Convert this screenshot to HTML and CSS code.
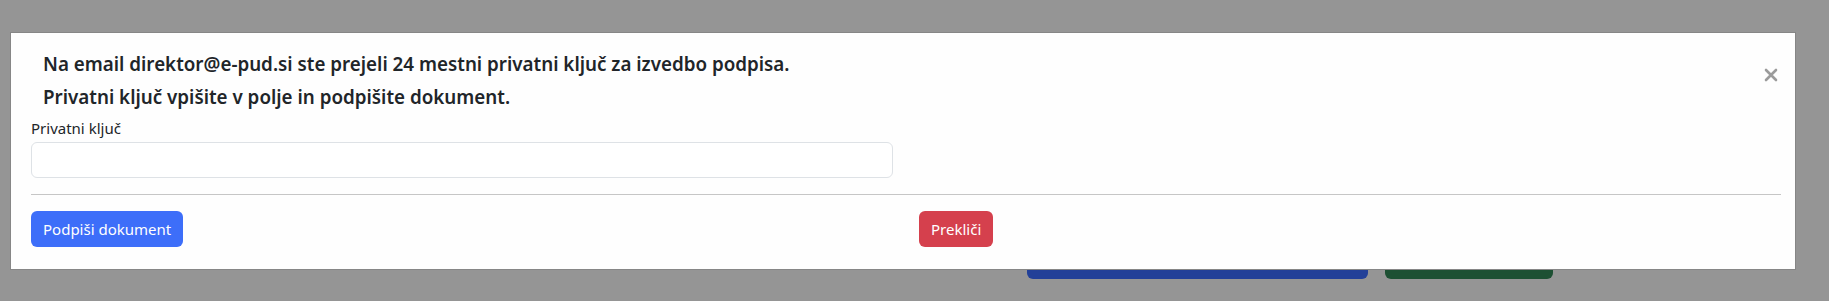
FILE: index.html
```html
<!DOCTYPE html>
<html lang="sl">
<head>
    <meta charset="UTF-8">
    <meta name="viewport" content="width=device-width, initial-scale=1.0">
    <title>Podpis dokumenta</title>
    <link rel="stylesheet" href="styles.css">
</head>
<body>
    <div class="page">
        <div class="page-btn page-btn-blue"></div>
        <div class="page-btn page-btn-green"></div>
    </div>

    <div class="modal">
        <div class="modal-head">
            <h5 class="modal-title">
                Na email direktor@e-pud.si ste prejeli 24 mestni privatni ključ za izvedbo podpisa.<br>
                Privatni ključ vpišite v polje in podpišite dokument.
            </h5>
            <button class="close" type="button" aria-label="Zapri">
                <svg width="14" height="14" viewBox="0 0 14 14">
                    <path d="M2 2 L12 12 M12 2 L2 12" stroke="#9b9b9b" stroke-width="2.6" stroke-linecap="round"/>
                </svg>
            </button>
        </div>

        <div class="grid">
            <div class="field">
                <label for="key">Privatni ključ</label>
                <input type="text" id="key" class="input">
            </div>
        </div>

        <hr class="sep">

        <div class="grid">
            <div><button class="btn btn-primary">Podpiši dokument</button></div>
            <div><button class="btn btn-danger">Prekliči</button></div>
        </div>
    </div>
</body>
</html>
```

FILE: styles.css
```css
body {
    margin: 0;
    height: 301px;
    overflow: hidden;
    background-color: #959595;
    font-family: "Noto Sans", "DejaVu Sans", sans-serif;
    color: #212529;
}

/* page behind the backdrop */
.page {
    display: flex;
    gap: 17px;
    padding: 239px 0 0 1027px;
}

.page-btn {
    height: 40px;
    border-radius: 6px;
}

.page-btn-blue {
    width: 341px;
    background: #224098;
}

.page-btn-green {
    width: 168px;
    background: #1d5033;
}

/* modal dialog */
.modal {
    position: absolute;
    left: 10px;
    top: 32px;
    width: 1786px;
    height: 238px;
    box-sizing: border-box;
    background: #fefefe;
    border: 1px solid #868686;
    padding: 15px 14px 0 20px;
}

.modal-head {
    display: flex;
    justify-content: space-between;
    align-items: flex-start;
    padding-left: 12px;
}

.modal-title {
    margin: 0;
    font-size: 18.8px;
    font-weight: 600;
    line-height: 33px;
}

.close {
    border: none;
    background: none;
    padding: 0;
    margin: 20px 3px 0 0;
    width: 14px;
    height: 14px;
    cursor: pointer;
}

.grid {
    display: grid;
    grid-template-columns: 1fr 1fr;
    column-gap: 26px;
}

.field label {
    display: block;
    font-size: 15px;
    line-height: 24px;
    margin: 2px 0 2px;
}

.input {
    display: block;
    width: 100%;
    height: 36px;
    box-sizing: border-box;
    border: 1px solid #dee2e6;
    border-radius: 6px;
    background: #fff;
}

.sep {
    margin: 16px 0 16px;
    border: none;
    border-top: 1px solid #c6c6c6;
}

.btn {
    height: 36px;
    padding: 0 12px;
    border: none;
    border-radius: 6px;
    font-family: inherit;
    font-size: 15px;
    color: #fff;
    cursor: pointer;
}

.btn-primary {
    background: #3d6ef9;
}

.btn-danger {
    background: #d5404d;
}
```
